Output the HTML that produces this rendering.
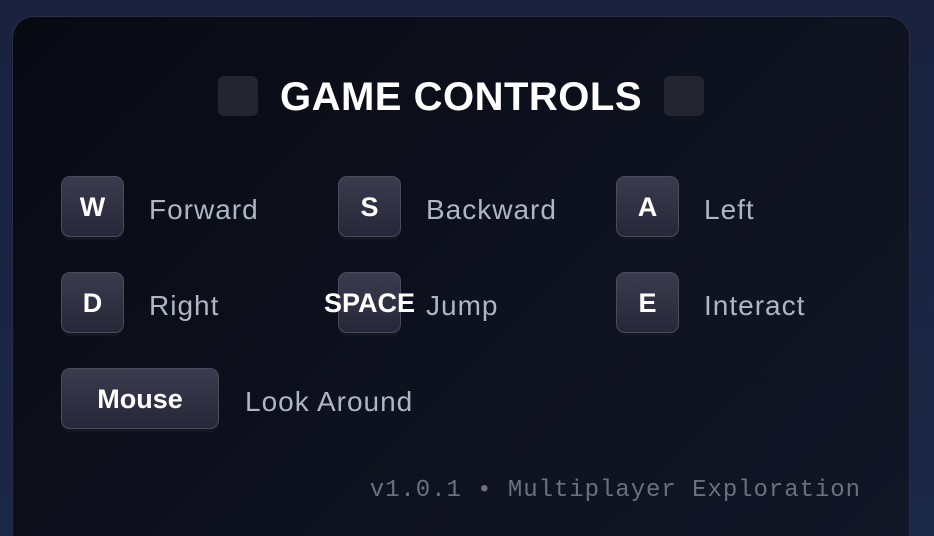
<!DOCTYPE html>
<html><head><style>
html,body{margin:0;padding:0;width:934px;height:536px;overflow:hidden;position:relative;background:linear-gradient(180deg,#1a2240,#1b2747);font-family:"Liberation Sans",sans-serif;}
.card{position:absolute;left:12px;top:16px;width:896px;height:540px;border-radius:22px;border:1px solid #2a2e3e;background:linear-gradient(135deg,#080a12 0%,#0f1220 60%,#121626 100%);}
.sq{position:absolute;top:76px;width:40px;height:40px;border-radius:6px;background:#232630;}
.title{position:absolute;left:258px;width:406px;top:73px;text-align:center;color:#fff;font-weight:bold;font-size:40px;line-height:48px;letter-spacing:0.5px;}
.key{position:absolute;height:61px;border-radius:9px;border:1px solid #4a4c5c;background:linear-gradient(180deg,#3a3b4e,#262839);box-shadow:0 3px 0 #15161f;color:#fff;font-weight:bold;font-size:27px;display:flex;align-items:center;justify-content:center;box-sizing:border-box;padding-top:2px;}
.lbl{position:absolute;color:#b0b5c3;font-size:28px;line-height:63px;letter-spacing:1px;margin-top:2px;}
.foot{position:absolute;right:73px;top:477px;font-family:"Liberation Mono",monospace;font-size:24px;letter-spacing:0.95px;color:#6c707b;}
</style></head><body>
<div class="card"></div>
<div class="sq" style="left:218px"></div>
<div class="sq" style="left:664px"></div>
<div class="title">GAME CONTROLS</div>

<div class="key" style="left:61px;top:176px;width:63px">W</div><div class="lbl" style="left:149px;top:176px">Forward</div>
<div class="key" style="left:338px;top:176px;width:63px">S</div><div class="lbl" style="left:426px;top:176px">Backward</div>
<div class="key" style="left:616px;top:176px;width:63px">A</div><div class="lbl" style="left:704px;top:176px">Left</div>

<div class="key" style="left:61px;top:272px;width:63px">D</div><div class="lbl" style="left:149px;top:272px">Right</div>
<div class="key" style="left:338px;top:272px;width:63px;overflow:visible;white-space:nowrap">SPACE</div><div class="lbl" style="left:426px;top:272px">Jump</div>
<div class="key" style="left:616px;top:272px;width:63px">E</div><div class="lbl" style="left:704px;top:272px">Interact</div>

<div class="key" style="left:61px;top:368px;width:158px">Mouse</div><div class="lbl" style="left:245px;top:368px">Look Around</div>

<div class="foot">v1.0.1 • Multiplayer Exploration</div>
</body></html>
